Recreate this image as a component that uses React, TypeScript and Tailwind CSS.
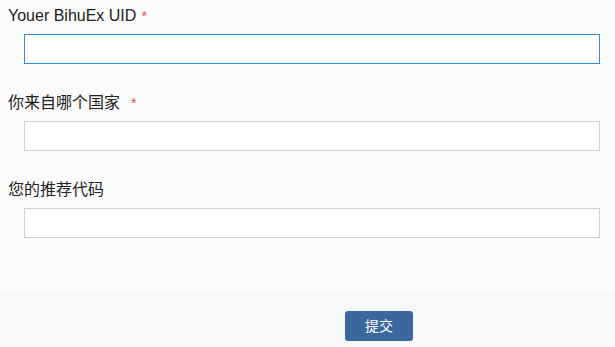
const FONT = "font-['Liberation_Sans','Noto_Sans_CJK_SC',sans-serif]";

function Field({
  label,
  required,
  starGap,
  focused,
}: {
  label: string;
  required?: boolean;
  starGap?: string;
  focused?: boolean;
}) {
  return (
    <div className="flex flex-col">
      <div className="h-[20px] pl-[8px] text-[16px] leading-[20px] text-[#222] whitespace-nowrap">
        {label}
        {required && <span className={`text-[14px] text-[#e0474c] ${starGap ?? "ml-[5px]"}`}>*</span>}
      </div>
      <input
        className={`mt-[8px] ml-[24px] h-[30px] w-[576px] bg-white outline-none border ${
          focused ? "border-[#2a8de0]" : "border-[#cfcfcf]"
        }`}
      />
    </div>
  );
}

export default function App() {
  return (
    <div className={`w-[615px] h-[347px] bg-[#fcfcfc] flex flex-col ${FONT}`}>
      <div className="flex flex-col gap-[29px] pt-[6px]">
        <Field label="Youer BihuEx UID" required focused />
        <Field label="你来自哪个国家" required starGap="ml-[11px]" />
        <Field label="您的推荐代码" />
      </div>
      <div className="mt-[52px] flex-1 bg-[#f8f9fb] pt-[21px] pl-[345px]">
        <button className="h-[30px] w-[68px] rounded-[3px] bg-[#3b679f] text-[14px] text-white">提交</button>
      </div>
    </div>
  );
}
